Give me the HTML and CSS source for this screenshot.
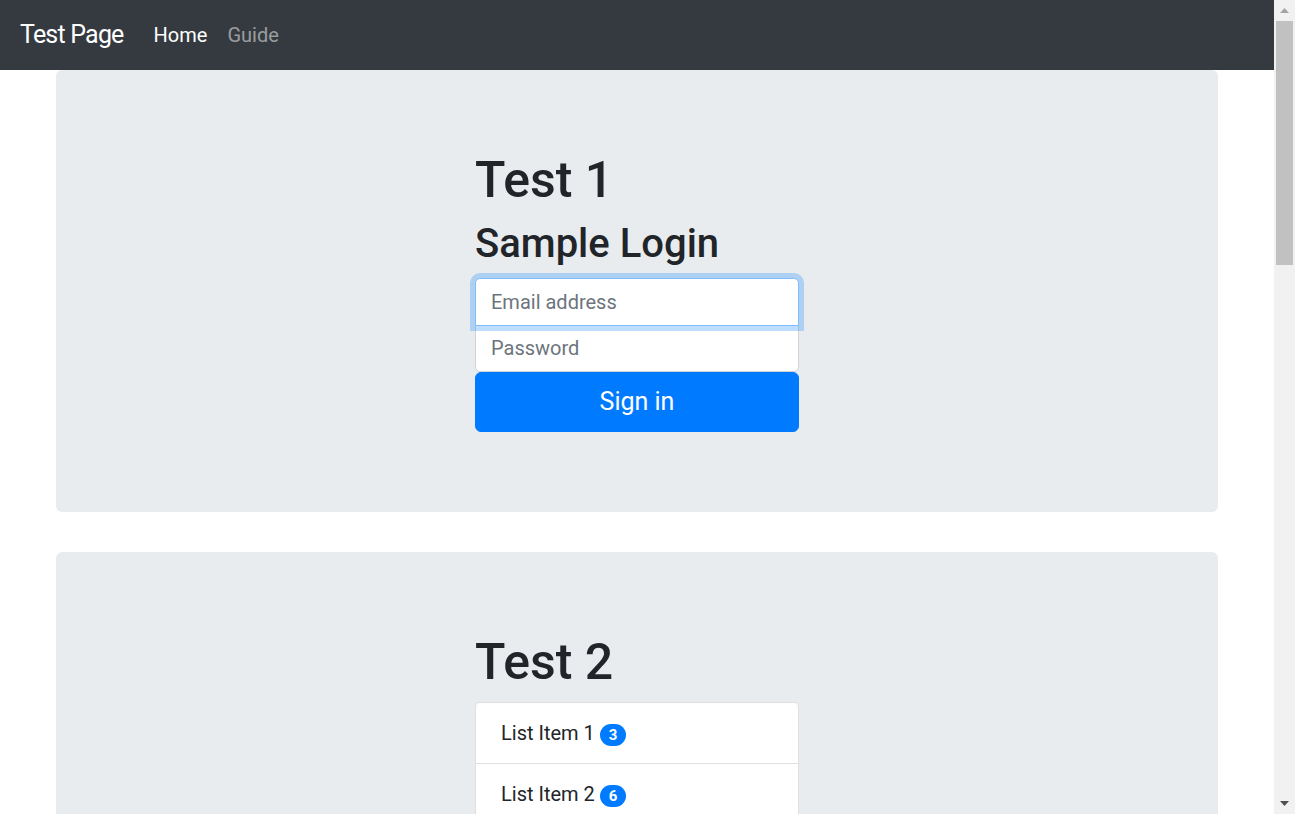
FILE: index.html
```html
<!DOCTYPE html>
<html lang="en">
<head>
<meta charset="utf-8">
<title>Test Page</title>
<link rel="stylesheet" href="styles.css">
</head>
<body>
<div class="app">
  <div class="page">
    <nav class="navbar">
      <a class="brand" href="#">Test Page</a>
      <ul class="nav">
        <li><a class="nav-link active" href="#">Home</a></li>
        <li><a class="nav-link" href="#">Guide</a></li>
      </ul>
    </nav>
    <main class="container">
      <section class="jumbotron">
        <div class="inner">
          <h1 class="title">Test 1</h1>
          <h2 class="subtitle">Sample Login</h2>
          <form class="signin">
            <input class="field field-top is-focus" type="email" placeholder="Email address" autofocus>
            <input class="field field-bottom" type="password" placeholder="Password">
            <button class="btn-primary" type="button">Sign in</button>
          </form>
        </div>
      </section>
      <section class="jumbotron">
        <div class="inner">
          <h1 class="title">Test 2</h1>
          <ul class="list-group">
            <li class="list-item">List Item 1 <span class="badge">3</span></li>
            <li class="list-item">List Item 2 <span class="badge">6</span></li>
            <li class="list-item">List Item 3 <span class="badge">9</span></li>
          </ul>
        </div>
      </section>
    </main>
  </div>
  <div class="scrollbar" aria-hidden="true">
    <div class="sb-btn">
      <svg width="9" height="5" viewBox="0 0 9 5"><polygon points="4.5,0 9,5 0,5" fill="#a3a3a3"/></svg>
    </div>
    <div class="sb-thumb"></div>
    <div class="sb-track"></div>
    <div class="sb-btn">
      <svg width="9" height="5" viewBox="0 0 9 5"><polygon points="0,0 9,0 4.5,5" fill="#505050"/></svg>
    </div>
  </div>
</div>
</body>
</html>
```
FILE: styles.css
```css
* { box-sizing: border-box; }
html, body { margin: 0; padding: 0; }
body {
  font-family: "Segoe UI", Roboto, "Noto Sans", "Liberation Sans", sans-serif;
  font-size: 20px;
  line-height: 1.5;
  color: #212529;
  background: #fff;
}
.app {
  display: flex;
  height: 100vh;
  overflow: hidden;
}
.page {
  flex: 1;
  min-width: 0;
  overflow: hidden;
}
.scrollbar {
  width: 21px;
  flex: none;
  display: flex;
  flex-direction: column;
  align-items: center;
  background: #f1f1f1;
}
.sb-btn {
  height: 21px;
  width: 21px;
  display: flex;
  align-items: center;
  justify-content: center;
}
.sb-btn svg { display: block; }
.sb-thumb {
  width: 17px;
  height: 244px;
  background: #c1c1c1;
}
.sb-track { flex: 1; }
.navbar {
  display: flex;
  align-items: center;
  padding: 10px 20px;
  background: #343a40;
}
.brand {
  font-size: 25px;
  line-height: 37.5px;
  padding: 6.25px 0;
  margin-right: 20px;
  letter-spacing: -0.8px;
  color: #fff;
  text-decoration: none;
  white-space: nowrap;
}
.nav {
  display: flex;
  list-style: none;
  margin: 0;
  padding: 0;
}
.nav-link {
  display: block;
  padding: 10px;
  font-size: 20px;
  line-height: 30px;
  color: rgba(255,255,255,.5);
  text-decoration: none;
}
.nav-link.active { color: #fff; }
.container {
  max-width: 1200px;
  margin: 0 auto;
  padding: 0 18.75px;
}
.jumbotron {
  background: #e9ecef;
  border-radius: 6px;
  padding: 80px 40px;
  margin-bottom: 40px;
}
.inner {
  width: 324px;
  margin: 0 auto;
}
.title {
  font-size: 50px;
  font-weight: 500;
  line-height: 1.2;
  margin: 0 0 10px;
}
.subtitle {
  font-size: 40px;
  font-weight: 500;
  line-height: 1.2;
  margin: 0 0 10px;
}
.signin { margin: 0; }
.field {
  display: block;
  position: relative;
  width: 100%;
  height: 47.5px;
  padding: 7.5px 15px;
  font: inherit;
  font-size: 20px;
  line-height: 30px;
  color: #495057;
  background: #fff;
  border: 1px solid #ced4da;
  border-radius: 5px;
  outline: none;
}
.field::placeholder { color: #6c757d; opacity: 1; }
.field-top {
  margin-bottom: -1px;
  border-bottom-left-radius: 0;
  border-bottom-right-radius: 0;
}
.field-bottom {
  border-top-left-radius: 0;
  border-top-right-radius: 0;
}
.is-focus, .field:focus {
  z-index: 2;
  border-color: #80bdff;
  box-shadow: 0 0 0 5px rgba(0,123,255,.25);
}
.btn-primary {
  display: block;
  width: 100%;
  padding: 10px 20px;
  font: inherit;
  font-size: 25px;
  line-height: 37.5px;
  color: #fff;
  background: #007bff;
  border: 1.25px solid #007bff;
  border-radius: 6px;
  text-align: center;
}
.list-group {
  list-style: none;
  margin: 0;
  padding: 0;
  background: #fff;
  border: 1px solid rgba(0,0,0,.125);
  border-radius: 5px;
}
.list-item {
  padding: 15px 25px;
  font-size: 20px;
  line-height: 30px;
}
.list-item + .list-item { border-top: 1px solid rgba(0,0,0,.125); }
.badge {
  display: inline-block;
  padding: 3.75px 9px;
  font-size: 15px;
  font-weight: 700;
  line-height: 1;
  color: #fff;
  background: #007bff;
  border-radius: 200px;
  vertical-align: baseline;
  text-align: center;
}
```
